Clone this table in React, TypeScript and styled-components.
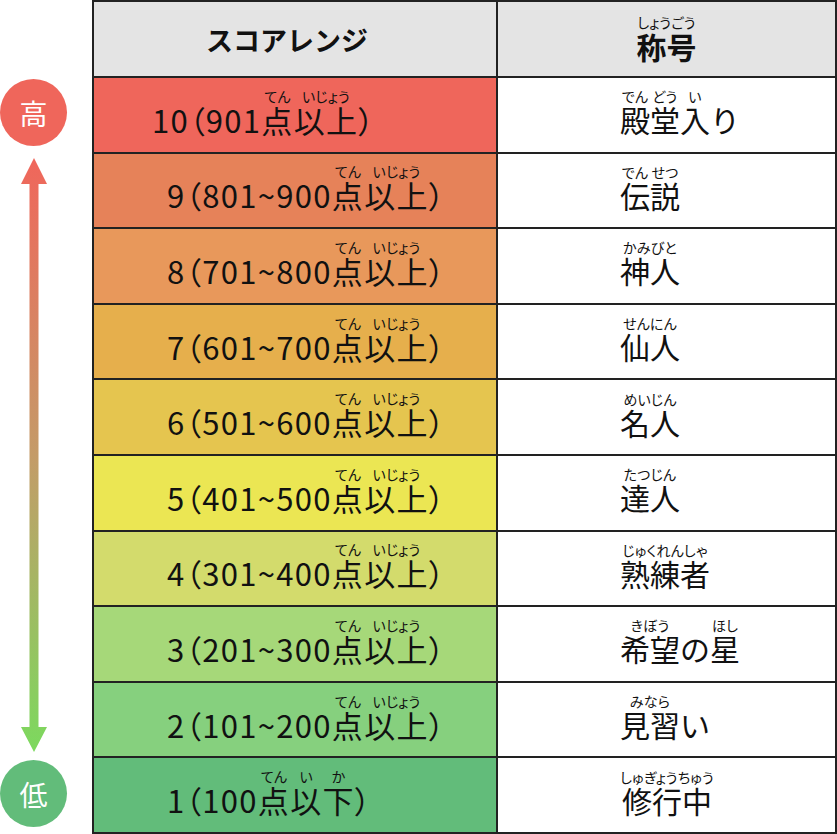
import React from "react";
import styled, { createGlobalStyle } from "styled-components";

const Global = createGlobalStyle`
  html, body { margin: 0; padding: 0; background: #ffffff; }
  body {
    font-family: "Noto Sans CJK JP", "Noto Sans", sans-serif;
    color: #111111;
  }
`;

const Page = styled.div`
  display: flex;
  width: 837px;
  height: 834px;
  overflow: hidden;
`;

const Scale = styled.div`
  flex: none;
  width: 92px;
  display: flex;
  flex-direction: column;
  align-items: flex-start;
  padding-top: 79px;
  box-sizing: border-box;
`;

const ScaleInner = styled.div`
  width: 67px;
  display: flex;
  flex-direction: column;
  align-items: center;
`;

const Badge = styled.div<{ $bg: string }>`
  width: 67px;
  height: 67px;
  border-radius: 50%;
  background: ${(p) => p.$bg};
  color: #ffffff;
  display: flex;
  align-items: center;
  justify-content: center;
  font-size: 28px;
  font-weight: 400;
  line-height: 1;
`;

const ArrowSvg = styled.svg`
  display: block;
  margin: 12px 0 8px;
`;

const Table = styled.div`
  display: grid;
  grid-template-columns: 402px 337px;
  grid-template-rows: 74px repeat(10, 1fr);
  gap: 2px;
  width: 745px;
  height: 834px;
  box-sizing: border-box;
  background: #222222;
  border: 2px solid #222222;
`;

const HeadCell = styled.div<{ $shift?: number }>`
  background: #e4e4e4;
  display: flex;
  align-items: center;
  justify-content: center;
  padding-right: ${(p) => p.$shift ?? 0}px;
  font-weight: 700;
  font-size: 27px;
  line-height: 1;
`;

const HeadTitle = styled.span`
  font-size: 30px;
  line-height: 1;
  padding-top: 5px;
`;

const ScoreCell = styled.div<{ $bg: string; $indent: number }>`
  background: ${(p) => p.$bg};
  display: flex;
  align-items: center;
  padding-left: ${(p) => p.$indent}px;
  padding-bottom: 5px;
  font-size: 31px;
  font-weight: 400;
  line-height: 1;
  letter-spacing: 1.3px;
  font-feature-settings: "palt";
  white-space: nowrap;
`;

const TitleCell = styled.div`
  background: #ffffff;
  display: flex;
  align-items: center;
  padding-left: 122px;
  padding-bottom: 5px;
  font-size: 30px;
  font-weight: 400;
  line-height: 1;
  white-space: nowrap;
`;

const Rb = styled.ruby`
  ruby-position: over;
  ruby-align: center;
`;

const Rt = styled.rt<{ $drop: number }>`
  position: relative;
  top: ${(p) => p.$drop}px;
  font-size: 14px;
  font-weight: 400;
  line-height: 1;
  letter-spacing: 0.2px;
  ruby-align: center;
  font-feature-settings: "palt";
`;

type Seg = string | [string, string];

const Ruby: React.FC<{ segs: Seg[]; drop?: number }> = ({ segs, drop = -1 }) => (
  <>
    {segs.map((s, i) =>
      typeof s === "string" ? (
        <React.Fragment key={i}>{s}</React.Fragment>
      ) : (
        <Rb key={i}>
          {s[0]}
          <Rt $drop={drop}>{s[1]}</Rt>
        </Rb>
      )
    )}
  </>
);

const up: Seg[] = [["点", "てん"], ["以上", "いじょう"], "）"];

const rows: { bg: string; indent: number; score: Seg[]; title: Seg[] }[] = [
  { bg: "#ef665b", indent: 58, score: ["10（901", ...up], title: [["殿", "でん"], ["堂", "どう"], ["入", "い"], "り"] },
  { bg: "#e68259", indent: 73, score: ["9（801~900", ...up], title: [["伝", "でん"], ["説", "せつ"]] },
  { bg: "#e8985b", indent: 73, score: ["8（701~800", ...up], title: [["神人", "かみびと"]] },
  { bg: "#e6af4c", indent: 73, score: ["7（601~700", ...up], title: [["仙人", "せんにん"]] },
  { bg: "#e5c54f", indent: 73, score: ["6（501~600", ...up], title: [["名人", "めいじん"]] },
  { bg: "#ebe653", indent: 73, score: ["5（401~500", ...up], title: [["達人", "たつじん"]] },
  { bg: "#d3db6c", indent: 73, score: ["4（301~400", ...up], title: [["熟練者", "じゅくれんしゃ"]] },
  { bg: "#a6d879", indent: 73, score: ["3（201~300", ...up], title: [["希望", "きぼう"], "の", ["星", "ほし"]] },
  { bg: "#86d07e", indent: 73, score: ["2（101~200", ...up], title: [["見習", "みなら"], "い"] },
  { bg: "#62bc7a", indent: 73, score: ["1（100", ["点", "てん"], ["以", "い"], ["下", "か"], "）"], title: [["修行中", "しゅぎょうちゅう"]] },
];

const Arrow: React.FC = () => (
  <ArrowSvg width="26" height="594" viewBox="0 0 26 594">
    <defs>
      <linearGradient id="arrowGrad" x1="0" y1="0" x2="0" y2="1">
        <stop offset="0" stopColor="#f0665b" />
        <stop offset="0.5" stopColor="#c49b68" />
        <stop offset="1" stopColor="#7cd95e" />
      </linearGradient>
    </defs>
    <path
      d="M13 0 L26 26 L17.5 26 L17.5 569 L26 569 L13 594 L0 569 L8.5 569 L8.5 26 L0 26 Z"
      fill="url(#arrowGrad)"
    />
  </ArrowSvg>
);

export default function App() {
  return (
    <>
      <Global />
      <Page>
        <Scale>
          <ScaleInner>
            <Badge $bg="#ef665b">高</Badge>
            <Arrow />
            <Badge $bg="#62bc7a">低</Badge>
          </ScaleInner>
        </Scale>
        <Table>
          <HeadCell $shift={16}>スコアレンジ</HeadCell>
          <HeadCell>
            <HeadTitle>
              <Ruby segs={[["称号", "しょうごう"]]} drop={-2} />
            </HeadTitle>
          </HeadCell>
          {rows.map((r, i) => (
            <React.Fragment key={i}>
              <ScoreCell $bg={r.bg} $indent={r.indent}>
                <span>
                  <Ruby segs={r.score} />
                </span>
              </ScoreCell>
              <TitleCell>
                <span>
                  <Ruby segs={r.title} />
                </span>
              </TitleCell>
            </React.Fragment>
          ))}
        </Table>
      </Page>
    </>
  );
}
